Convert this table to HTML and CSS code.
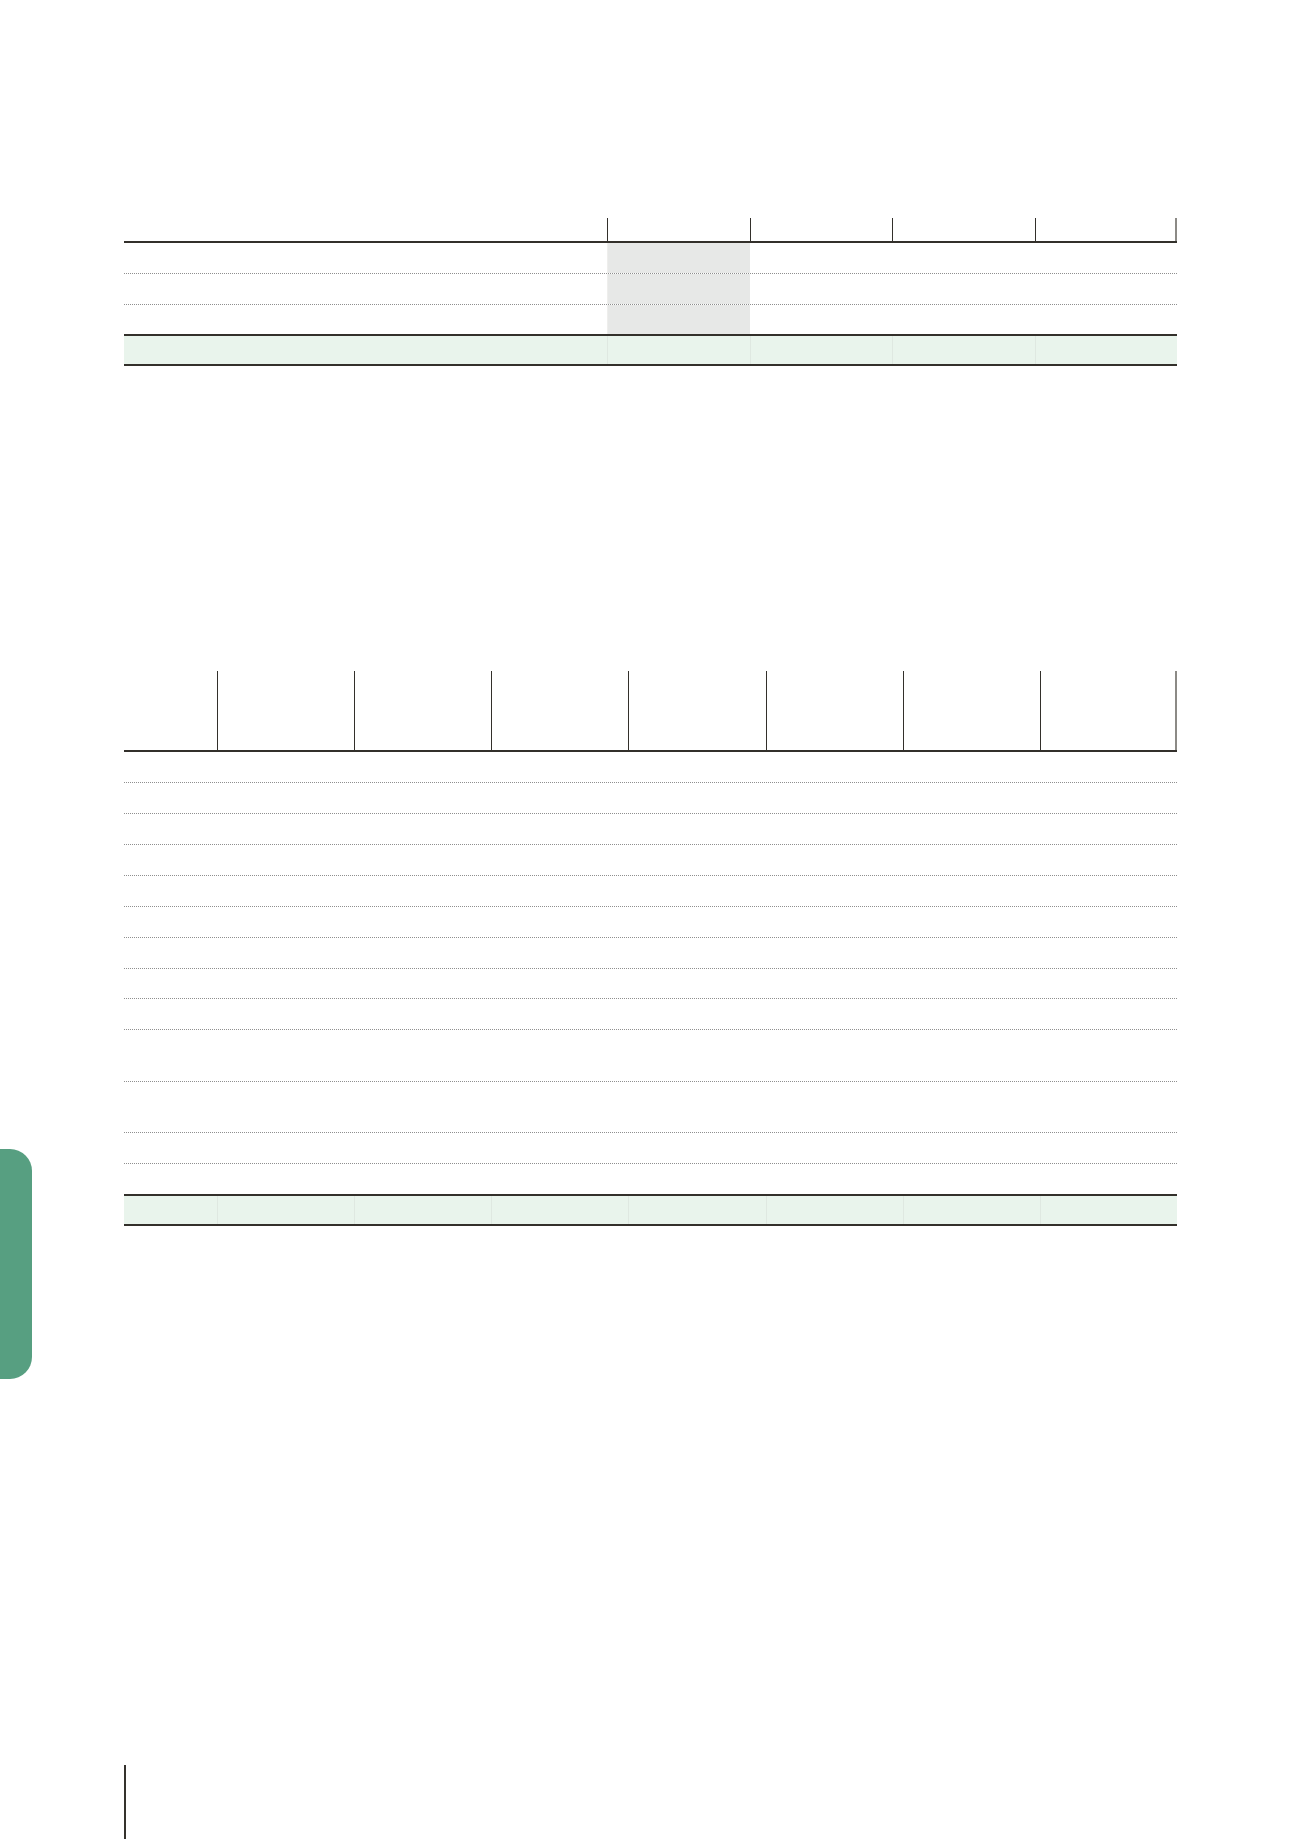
FILE: index.html
```html
<!DOCTYPE html>
<html lang="en">
<head>
<meta charset="utf-8">
<title>Tables</title>
<link rel="stylesheet" href="styles.css">
</head>
<body>
<div class="page">
  <aside class="side">
    <div class="tab"></div>
  </aside>
  <main class="main">
    <section class="tbl tbl-a">
      <div class="row head">
        <div class="c"></div><div class="c v"></div><div class="c v"></div><div class="c v"></div><div class="c v last"></div>
      </div>
      <div class="row data h31">
        <div class="c"></div><div class="c v shade"></div><div class="c"></div><div class="c"></div><div class="c"></div>
      </div>
      <div class="row data h31">
        <div class="c"></div><div class="c v shade"></div><div class="c"></div><div class="c"></div><div class="c"></div>
      </div>
      <div class="row data end h29">
        <div class="c"></div><div class="c v shade"></div><div class="c"></div><div class="c"></div><div class="c"></div>
      </div>
      <div class="row total">
        <div class="c"></div><div class="c f"></div><div class="c f"></div><div class="c f"></div><div class="c f"></div>
      </div>
    </section>

    <section class="tbl tbl-b">
      <div class="row head">
        <div class="c"></div><div class="c v"></div><div class="c v"></div><div class="c v"></div><div class="c v"></div><div class="c v"></div><div class="c v"></div><div class="c v last"></div>
      </div>
      <div class="row data h31"><div class="c"></div><div class="c"></div><div class="c"></div><div class="c"></div><div class="c"></div><div class="c"></div><div class="c"></div><div class="c"></div></div>
      <div class="row data h31"><div class="c"></div><div class="c"></div><div class="c"></div><div class="c"></div><div class="c"></div><div class="c"></div><div class="c"></div><div class="c"></div></div>
      <div class="row data h31"><div class="c"></div><div class="c"></div><div class="c"></div><div class="c"></div><div class="c"></div><div class="c"></div><div class="c"></div><div class="c"></div></div>
      <div class="row data h31"><div class="c"></div><div class="c"></div><div class="c"></div><div class="c"></div><div class="c"></div><div class="c"></div><div class="c"></div><div class="c"></div></div>
      <div class="row data h31"><div class="c"></div><div class="c"></div><div class="c"></div><div class="c"></div><div class="c"></div><div class="c"></div><div class="c"></div><div class="c"></div></div>
      <div class="row data h31"><div class="c"></div><div class="c"></div><div class="c"></div><div class="c"></div><div class="c"></div><div class="c"></div><div class="c"></div><div class="c"></div></div>
      <div class="row data h31"><div class="c"></div><div class="c"></div><div class="c"></div><div class="c"></div><div class="c"></div><div class="c"></div><div class="c"></div><div class="c"></div></div>
      <div class="row data h30"><div class="c"></div><div class="c"></div><div class="c"></div><div class="c"></div><div class="c"></div><div class="c"></div><div class="c"></div><div class="c"></div></div>
      <div class="row data h31"><div class="c"></div><div class="c"></div><div class="c"></div><div class="c"></div><div class="c"></div><div class="c"></div><div class="c"></div><div class="c"></div></div>
      <div class="row data h52"><div class="c"></div><div class="c"></div><div class="c"></div><div class="c"></div><div class="c"></div><div class="c"></div><div class="c"></div><div class="c"></div></div>
      <div class="row data h51"><div class="c"></div><div class="c"></div><div class="c"></div><div class="c"></div><div class="c"></div><div class="c"></div><div class="c"></div><div class="c"></div></div>
      <div class="row data h31"><div class="c"></div><div class="c"></div><div class="c"></div><div class="c"></div><div class="c"></div><div class="c"></div><div class="c"></div><div class="c"></div></div>
      <div class="row data end h30"><div class="c"></div><div class="c"></div><div class="c"></div><div class="c"></div><div class="c"></div><div class="c"></div><div class="c"></div><div class="c"></div></div>
      <div class="row total">
        <div class="c"></div><div class="c f"></div><div class="c f"></div><div class="c f"></div><div class="c f"></div><div class="c f"></div><div class="c f"></div><div class="c f"></div>
      </div>
    </section>

    <div class="margin-rule"></div>
  </main>
</div>
</body>
</html>
```

FILE: styles.css
```css
html, body {
  margin: 0;
  padding: 0;
  background: #ffffff;
  font-family: "Liberation Sans", Arial, sans-serif;
}

body {
  width: 1300px;
  height: 1839px;
  overflow: hidden;
}

.page {
  display: flex;
  align-items: flex-start;
  width: 1300px;
  height: 1839px;
}

.side {
  width: 32px;
  flex: 0 0 32px;
  padding-top: 1149px;
}

.tab {
  width: 32px;
  height: 230px;
  background: #579f81;
  border-radius: 0 22px 22px 0;
}

.main {
  margin-left: 92px;
  padding-top: 218px;
  display: flex;
  flex-direction: column;
}

.tbl {
  width: 1053px;
}

.tbl-a .row {
  display: grid;
  grid-template-columns: 483px repeat(4, 1fr);
}

.tbl-b {
  margin-top: 305px;
}

.tbl-b .row {
  display: grid;
  grid-template-columns: 93px repeat(7, 1fr);
}

.row {
  box-sizing: border-box;
}

.c {
  box-sizing: border-box;
}

.head {
  border-bottom: 2px solid #33302b;
}

.tbl-a .head {
  height: 25px;
}

.tbl-b .head {
  height: 81px;
}

.head .v {
  border-left: 1px solid #33302b;
}

.head .last {
  border-right: 2px solid #8c8a86;
}

.data {
  border-bottom: 1px dotted #8f8f8f;
}

.data.end {
  border-bottom: none;
}

.h29 { height: 29px; }
.h30 { height: 30px; }
.h31 { height: 31px; }
.h51 { height: 51px; }
.h52 { height: 52px; }

.shade {
  background: #e7e8e7;
}

.data .shade.v {
  border-left: 1px solid #eeeeec;
}

.total {
  height: 32px;
  background: #e9f4ec;
  border-top: 2px solid #33302b;
  border-bottom: 2px solid #33302b;
}

.total .f {
  border-left: 1px solid #dfe8e1;
}

.margin-rule {
  margin-top: 539px;
  width: 0;
  height: 80px;
  border-left: 2px solid #35322d;
}
```
